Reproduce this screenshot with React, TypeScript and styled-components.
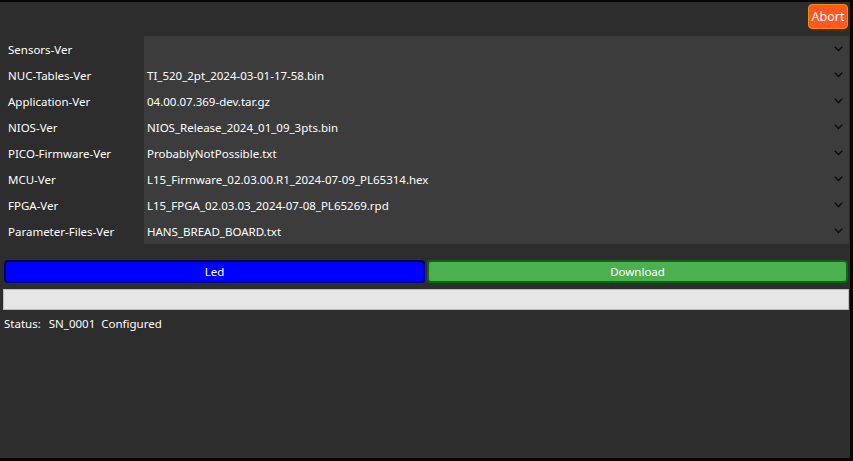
import React from "react";
import styled, { createGlobalStyle } from "styled-components";

const Global = createGlobalStyle`
  html, body { margin: 0; padding: 0; background: #000; }
  body { font-family: "Noto Sans", "Open Sans", sans-serif; }
  * { box-sizing: border-box; }
`;

const Window = styled.div`
  width: 853px;
  height: 461px;
  background: #2d2d2d;
  border-top: 2px solid #050505;
  border-right: 3px solid #050505;
  border-bottom: 3px solid #050505;
  display: flex;
  flex-direction: column;
  color: #ffffff;
  font-size: 11.5px;
`;

const TopBar = styled.div`
  height: 34px;
  display: flex;
  justify-content: flex-end;
  align-items: flex-start;
  padding: 2px 2px 0 0;
`;

const AbortButton = styled.button`
  width: 40px;
  height: 25px;
  background: #ff5722;
  border: 1px solid #ff8c00;
  border-radius: 4px;
  color: #ffffff;
  font-family: inherit;
  font-size: 12.5px;
  padding: 0;
  cursor: pointer;
`;

const FieldGrid = styled.div`
  display: grid;
  grid-template-columns: 144px 1fr;
  grid-auto-rows: 26px;
  margin-right: 1px;
`;

const Label = styled.div`
  display: flex;
  align-items: center;
  padding-left: 8px;
  white-space: nowrap;
`;

const Select = styled.div`
  background: #3c3c3c;
  display: flex;
  align-items: center;
  justify-content: space-between;
  padding: 0 6px 0 3px;
  white-space: nowrap;
`;

const Chevron = styled.svg`
  width: 9px;
  height: 6px;
  flex: none;
`;

const ButtonRow = styled.div`
  display: grid;
  grid-template-columns: 1fr 1fr;
  gap: 2px;
  margin: 16px 2px 0 4px;
  height: 23px;
`;

const ActionButton = styled.button<{ $bg: string; $edge: string }>`
  background: ${(p) => p.$bg};
  border: 2px solid ${(p) => p.$edge};
  border-radius: 4px;
  color: #ffffff;
  font-family: inherit;
  font-size: 11.5px;
  padding: 0;
  cursor: pointer;
`;

const Progress = styled.div`
  margin: 6px 1px 0 3px;
  height: 21px;
  background: #e6e6e6;
  border: 1px solid #bcbcbc;
`;

const Status = styled.div`
  margin-top: 6px;
  padding-left: 4px;
  display: flex;
  white-space: nowrap;
`;

const StatusPart = styled.span<{ $gap: number }>`
  margin-right: ${(p) => p.$gap}px;
`;

const rows: [string, string][] = [
  ["Sensors-Ver", ""],
  ["NUC-Tables-Ver", "TI_520_2pt_2024-03-01-17-58.bin"],
  ["Application-Ver", "04.00.07.369-dev.tar.gz"],
  ["NIOS-Ver", "NIOS_Release_2024_01_09_3pts.bin"],
  ["PICO-Firmware-Ver", "ProbablyNotPossible.txt"],
  ["MCU-Ver", "L15_Firmware_02.03.00.R1_2024-07-09_PL65314.hex"],
  ["FPGA-Ver", "L15_FPGA_02.03.03_2024-07-08_PL65269.rpd"],
  ["Parameter-Files-Ver", "HANS_BREAD_BOARD.txt"],
];

export default function App() {
  return (
    <>
      <Global />
      <Window>
        <TopBar>
          <AbortButton>Abort</AbortButton>
        </TopBar>
        <FieldGrid>
          {rows.map(([label, value]) => (
            <React.Fragment key={label}>
              <Label>{label}</Label>
              <Select>
                <span>{value}</span>
                <Chevron viewBox="0 0 9 6">
                  <path d="M0.8 0.8 L4.5 4.5 L8.2 0.8" fill="none" stroke="#0a0a0a" strokeWidth="1.4" />
                </Chevron>
              </Select>
            </React.Fragment>
          ))}
        </FieldGrid>
        <ButtonRow>
          <ActionButton $bg="#0000ff" $edge="#00006a">Led</ActionButton>
          <ActionButton $bg="#4caf50" $edge="#0b6a0f">Download</ActionButton>
        </ButtonRow>
        <Progress />
        <Status>
          <StatusPart $gap={8}>Status:</StatusPart>
          <StatusPart $gap={6}>SN_0001</StatusPart>
          <StatusPart $gap={0}>Configured</StatusPart>
        </Status>
      </Window>
    </>
  );
}
